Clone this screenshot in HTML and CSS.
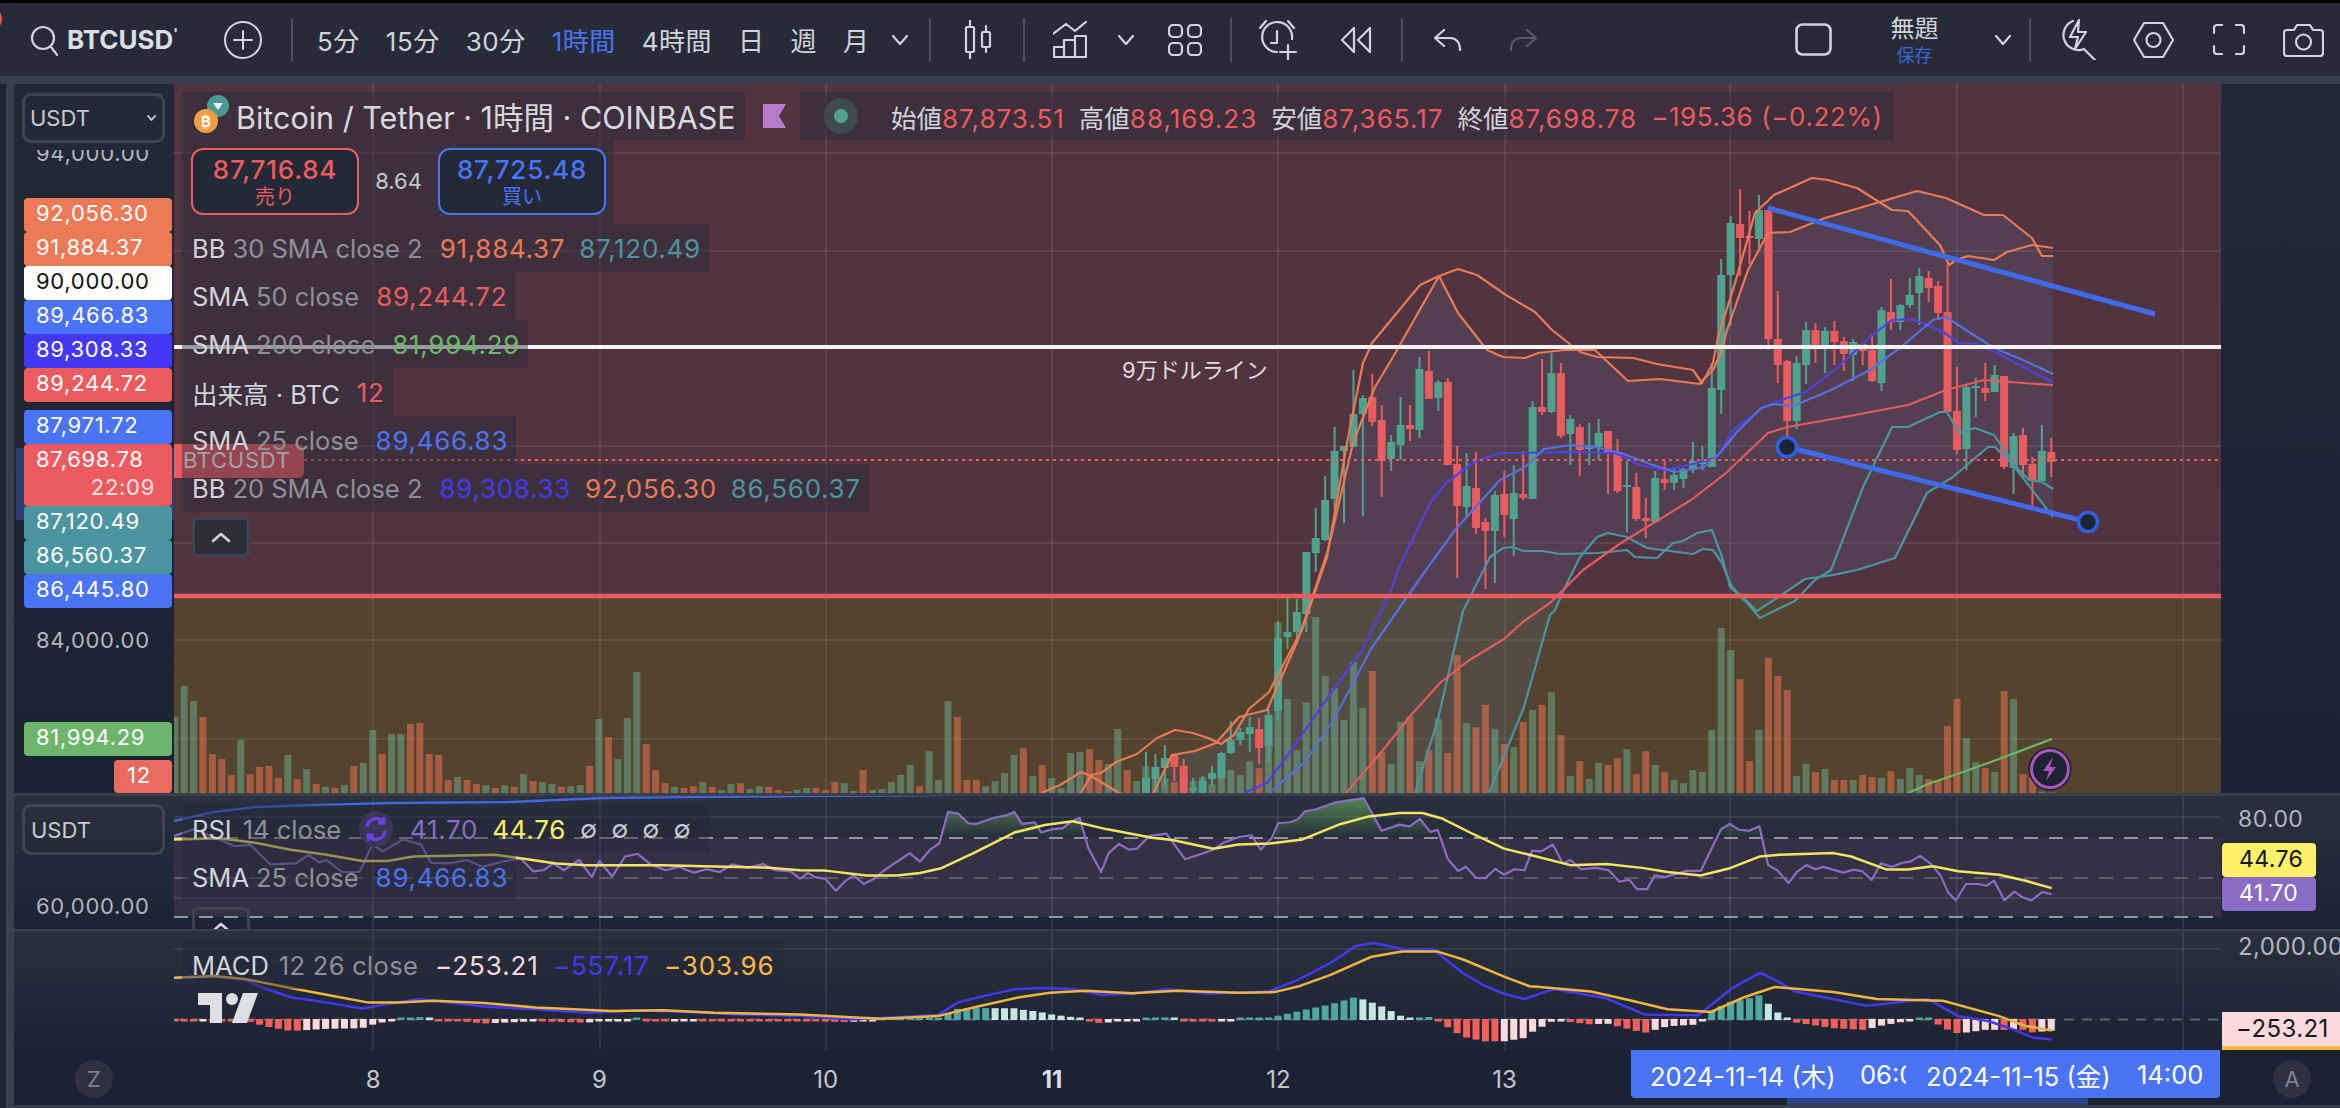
FILE: index.html
```html
<!DOCTYPE html>
<html lang="ja">
<head>
<meta charset="utf-8">
<title>BTCUSD</title>
<link rel="stylesheet" href="styles.css">
</head>
<body>
<div class="app">
  <div class="strip"><span class="avatar-dot"></span></div>
  <header class="toolbar">
    <svg class="ic ic-search" width="28" height="32" viewBox="0 0 28 32"><circle cx="13" cy="14" r="11"/><path d="M21 23l7 9"/></svg>
    <span class="symbol">BTCUSD<sup class="symbol-mark">'</sup></span>
    <svg class="ic ic-plus" width="38" height="38" viewBox="0 0 38 38"><circle cx="19" cy="19" r="18"/><path d="M19 10v18M10 19h18"/></svg>
    <span class="sep sep-a"></span>
    <nav class="intervals">
      <span>5分</span><span>15分</span><span>30分</span><span class="active">1時間</span><span>4時間</span><span>日</span><span>週</span><span>月</span>
    </nav>
    <svg class="ic ic-chev ml-chev1" width="16" height="10" viewBox="0 0 16 10"><path d="M1 1l7 8 7-8"/></svg>
    <span class="sep sep-b"></span>
    <svg class="ic ic-candle" width="29" height="39" viewBox="0 0 29 39"><path d="M6 0v7M6 32v7M22 6v6M22 27v5"/><rect x="2" y="7" width="8" height="25" rx="1"/><rect x="18" y="12" width="8" height="15" rx="1"/></svg>
    <span class="sep sep-c"></span>
    <svg class="ic ic-bars" width="34" height="37" viewBox="0 0 34 37"><path d="M0 13L13 3l9 7L34 0M1 36V26h10v10M11 36V19h11v17M22 36V15h11v21M1 36h32"/></svg>
    <svg class="ic ic-chev ml-chev2" width="16" height="10" viewBox="0 0 16 10"><path d="M1 1l7 8 7-8"/></svg>
    <svg class="ic ic-squares" width="34" height="32" viewBox="0 0 34 32"><rect x="1" y="1" width="13" height="12" rx="4"/><rect x="20" y="1" width="13" height="12" rx="4"/><rect x="1" y="19" width="13" height="12" rx="4"/><rect x="20" y="19" width="13" height="12" rx="4"/></svg>
    <span class="sep sep-d"></span>
    <svg class="ic ic-alarm" width="40" height="41" viewBox="0 0 40 41"><path d="M19 33a15 15 0 1 1 15-13M19 12v12h-6M2 9l6-7M36 9l-6-7M30 26v15M22 33h16"/></svg>
    <svg class="ic ic-rewind" width="32" height="26" viewBox="0 0 32 26"><path d="M14 1L2 13l12 12zM30 1L18 13l12 12z"/></svg>
    <span class="sep sep-e"></span>
    <svg class="ic ic-undo" width="28" height="22" viewBox="0 0 28 22"><path d="M10 1L1 9l9 8M1 9h15c6 0 10 4 10 12"/></svg>
    <svg class="ic ic-redo" width="28" height="22" viewBox="0 0 28 22"><path d="M18 1l9 8-9 8M27 9H12C6 9 2 13 2 21"/></svg>
    <svg class="ic ic-layout" width="37" height="33" viewBox="0 0 37 33"><rect x="1.500" y="1.500" width="34" height="30" rx="6"/></svg>
    <div class="layout-name"><span class="layout-title">無題</span><span class="layout-save">保存</span></div>
    <svg class="ic ic-chev ml-chev3" width="16" height="10" viewBox="0 0 16 10"><path d="M1 1l7 8 7-8"/></svg>
    <span class="sep sep-f"></span>
    <svg class="ic ic-bolt" width="38" height="41" viewBox="0 0 38 41"><path d="M14 2A15 15 0 1 0 25 30M25 30l11 11M20 1L11 18h8l-3 12 11-17h-8z"/></svg>
    <svg class="ic ic-hex" width="41" height="36" viewBox="0 0 41 36"><path d="M1 18L11 1h19l10 17-10 17H11z"/><circle cx="20.500" cy="18" r="7"/></svg>
    <svg class="ic ic-full" width="32" height="31" viewBox="0 0 32 31"><path d="M1 9V4a3 3 0 0 1 3-3h5M23 1h5a3 3 0 0 1 3 3v5M31 22v5a3 3 0 0 1-3 3h-5M9 30H4a3 3 0 0 1-3-3v-5"/></svg>
    <svg class="ic ic-camera" width="41" height="34" viewBox="0 0 41 34"><path d="M4 7h7l3-5h13l3 5h7a3 3 0 0 1 3 3v20a3 3 0 0 1-3 3H4a3 3 0 0 1-3-3V10a3 3 0 0 1 3-3z"/><circle cx="20.500" cy="19" r="7.500"/></svg>
  </header>
  <div class="rule"></div>
  <main class="workspace">
    <div class="rail"></div>
    <div class="stage">

      <section class="pane pane-main">
        <aside class="axis axis-left">
          <div class="range-mark"></div>
          <span class="axis-text text-94">94,000.00</span>
          <div class="currency currency-main"><span>USDT</span><svg class="ic ic-chev-sm" width="9" height="6" viewBox="0 0 9 6"><path d="M1 1l3.500 4L8 1"/></svg></div>
          <div class="tag-stack stack-upper">
            <span class="tag tag-orange">92,056.30</span>
            <span class="tag tag-orange">91,884.37</span>
            <span class="tag tag-white">90,000.00</span>
            <span class="tag tag-blue">89,466.83</span>
            <span class="tag tag-indigo">89,308.33</span>
            <span class="tag tag-red">89,244.72</span>
          </div>
          <div class="tag-stack stack-lower">
            <span class="tag tag-blue">87,971.72</span>
            <span class="tag tag-red tag-last">87,698.78<small>22:09</small></span>
            <span class="tag tag-teal">87,120.49</span>
            <span class="tag tag-teal">86,560.37</span>
            <span class="tag tag-blue">86,445.80</span>
          </div>
          <span class="axis-text text-84">84,000.00</span>
          <span class="tag tag-green tag-sma200">81,994.29</span>
          <span class="tag tag-vol">12</span>
        </aside>
        <div class="plot">
          <svg id="main-chart" class="chart" width="2047" height="709" viewBox="174 84 2047 709"></svg>
          <span class="line-note">9万ドルライン</span>
          <span class="symbol-tag">BTCUSDT</span>
          <svg class="bolt-badge" width="44" height="44" viewBox="0 0 44 44"><circle cx="22" cy="22" r="21.500" class="bolt-ring-outer"/><circle cx="22" cy="22" r="18.500" class="bolt-ring"/><path class="bolt-mark" d="M25 10L15 24h6l-3 10 10-14h-6z"/></svg>
          <div class="legend">
            <div class="legend-head">
              <div class="title-box">
                <svg class="coin" width="44" height="44" viewBox="0 0 44 44"><circle cx="27" cy="12" r="11" fill="#4a9a93"/><path d="M22 9h10l-5 7z" fill="#e8f2f0"/><circle cx="15" cy="27" r="12" fill="#f0a040"/><text x="15" y="33" class="coin-b">₿</text></svg>
                <span class="title-text">Bitcoin / Tether · 1時間 · COINBASE</span>
              </div>
              <svg class="flag" width="23" height="24" viewBox="0 0 23 24"><path d="M0 0h23l-7 12 7 12H0z"/></svg>
              <div class="ohlc-box">
                <span class="status"><i></i></span>
                <span class="ohlc-pair">始値<b>87,873.51</b></span>
                <span class="ohlc-pair">高値<b>88,169.23</b></span>
                <span class="ohlc-pair">安値<b>87,365.17</b></span>
                <span class="ohlc-pair">終値<b>87,698.78</b></span>
                <b class="ohlc-change">−195.36 (−0.22%)</b>
              </div>
            </div>
            <div class="quote-box">
              <div class="quote quote-sell"><b>87,716.84</b><span>売り</span></div>
              <span class="spread">8.64</span>
              <div class="quote quote-buy"><b>87,725.48</b><span>買い</span></div>
            </div>
            <div class="row row-bb30"><em>BB</em> <span>30 SMA close 2</span><b class="c-orange">91,884.37</b><b class="c-teal">87,120.49</b></div>
            <div class="row"><em>SMA</em> <span>50 close</span><b class="c-red">89,244.72</b></div>
            <div class="row"><em>SMA</em> <span>200 close</span><b class="c-green">81,994.29</b></div>
            <div class="row"><em>出来高 · BTC</em><b class="c-red">12</b></div>
            <div class="row"><em>SMA</em> <span>25 close</span><b class="c-blue">89,466.83</b></div>
            <div class="row"><em>BB</em> <span>20 SMA close 2</span><b class="c-indigo">89,308.33</b><b class="c-orange">92,056.30</b><b class="c-teal">86,560.37</b></div>
            <div class="collapse"><svg class="ic ic-up" width="20" height="11" viewBox="0 0 20 11"><path d="M2 9l8-7 8 7"/></svg></div>
          </div>
        </div>
        <aside class="axis axis-right"></aside>
      </section>

      <section class="pane pane-rsi">
        <aside class="axis axis-left">
          <div class="currency currency-rsi"><span>USDT</span></div>
          <span class="axis-text text-60">60,000.00</span>
        </aside>
        <div class="plot">
          <svg id="rsi-chart" class="chart" width="2047" height="133" viewBox="174 796 2047 133"></svg>
          <div class="legend legend-rsi">
            <div class="row row-rsi">
              <em>RSI</em> <span>14 close</span>
              <svg class="sync" width="34" height="36" viewBox="0 0 34 36"><ellipse cx="17" cy="18" rx="17" ry="18" class="sync-bg"/><path class="sync-arrow" d="M8 16a9 9 0 0 1 16-5M26 20a9 9 0 0 1-16 5M25 6v6h-6M9 30v-6h6"/></svg>
              <b class="c-purple">41.70</b><b class="c-yellow">44.76</b>
              <i class="nil">∅</i><i class="nil">∅</i><i class="nil">∅</i><i class="nil">∅</i>
            </div>
            <div class="row"><em>SMA</em> <span>25 close</span><b class="c-blue">89,466.83</b></div>
            <div class="collapse collapse-rsi"><svg class="ic ic-up" width="20" height="11" viewBox="0 0 20 11"><path d="M2 9l8-7 8 7"/></svg></div>
          </div>
        </div>
        <aside class="axis axis-right">
          <span class="axis-text text-80">80.00</span>
          <div class="tag-stack stack-rsi">
            <span class="tag tag-yellow">44.76</span>
            <span class="tag tag-purple">41.70</span>
          </div>
        </aside>
      </section>

      <section class="pane pane-macd">
        <aside class="axis axis-left"></aside>
        <div class="plot">
          <svg id="macd-chart" class="chart" width="2047" height="119" viewBox="174 931 2047 119"></svg>
          <div class="legend legend-macd">
            <div class="row"><em>MACD</em> <span>12 26 close</span><b class="c-pink">−253.21</b><b class="c-indigo">−557.17</b><b class="c-amber">−303.96</b></div>
          </div>
        </div>
        <aside class="axis axis-right">
          <span class="axis-text text-2000">2,000.00</span>
          <span class="tag tag-macd">−253.21</span>
        </aside>
      </section>

      <section class="pane pane-time">
        <aside class="axis axis-left axis-round"><span class="round-btn">Z</span></aside>
        <div class="plot time-plot">
          <div class="ticks">
            <span>8</span><span>9</span><span>10</span><b>11</b><span>12</span><span>13</span>
          </div>
          <div class="pill">
            <span class="pill-date">2024-11-14 (木)</span>
            <span class="pill-clip">06:00</span>
            <span class="pill-date pill-date-end">2024-11-15 (金)</span>
            <span class="pill-time">14:00</span>
          </div>
          <div class="pill-range"></div>
        </div>
        <aside class="axis axis-right axis-round"><span class="round-btn">A</span></aside>
      </section>

    </div>
  </main>
</div>
<script src="chart.js"></script>
</body>
</html>
```

FILE: styles.css
```css
* { box-sizing: border-box; }
html, body { margin: 0; padding: 0; }
body {
  width: 2340px;
  height: 1108px;
  overflow: hidden;
  background: #1b2232;
  color: #d1d4dc;
  font-family: Inter, "Noto Sans CJK JP", "Liberation Sans", sans-serif;
  font-size: 22px;
}
.app { display: flex; flex-direction: column; height: 1108px; }
.strip { height: 3px; background: #000; position: relative; flex: none; }
.avatar-dot { position: absolute; left: -14px; top: 9px; width: 16px; height: 20px; border-radius: 50%; background: #e8503f; z-index: 3; }

/* toolbar */
.toolbar { flex: none; height: 73px; display: flex; align-items: center; padding-left: 30px; background: #262b37; }
.ic { flex: none; fill: none; stroke: #d1d4dc; stroke-width: 2.2; stroke-linecap: round; stroke-linejoin: round; }
.symbol { margin-left: 9px; width: 116px; font-size: 26px; font-weight: 700; color: #dcdee3; white-space: nowrap; }
.symbol-mark { font-size: 14px; line-height: 0; }
.ic-plus { margin-left: 41px; stroke-width: 2; }
.sep { flex: none; width: 2px; height: 44px; background: #4a4f5c; }
.sep-a { margin-left: 29px; }
.intervals { display: flex; gap: 26px; margin-left: 24px; font-size: 26px; letter-spacing: .5px; color: #d1d4dc; white-space: nowrap; }
.intervals .active { color: #4a73f6; }
.ml-chev1 { margin-left: 22px; }
.sep-b { margin-left: 21px; }
.ic-candle { margin-left: 33px; }
.sep-c { margin-left: 30px; }
.ic-bars { margin-left: 28px; }
.ml-chev2 { margin-left: 31px; }
.ic-squares { margin-left: 34px; }
.sep-d { margin-left: 28px; }
.ic-alarm { margin-left: 26px; }
.ic-rewind { margin-left: 42px; }
.sep-e { margin-left: 29px; }
.ic-undo { margin-left: 31px; }
.ic-redo { margin-left: 47px; stroke: #555a66; }
.ic-layout { margin-left: 258px; stroke-width: 2.6; }
.layout-name { margin-left: 50px; width: 66px; display: flex; flex-direction: column; align-items: center; line-height: 26px; margin-top: 2px; }
.layout-title { font-size: 24px; color: #d1d4dc; line-height: 30px; }
.layout-save { font-size: 18px; color: #3b66d8; line-height: 24px; }
.ml-chev3 { margin-left: 47px; }
.sep-f { margin-left: 18px; }
.ic-bolt { margin-left: 28px; }
.ic-hex { margin-left: 36px; }
.ic-full { margin-left: 39px; }
.ic-camera { margin-left: 38px; }

.rule { flex: none; height: 8px; background: #3a404b; }
.workspace { flex: 1; display: flex; min-height: 0; }
.rail { flex: none; width: 6px; background: #1f2431; }
.stage { flex: 1; border-left: 8px solid #3a404b; display: flex; flex-direction: column; min-width: 0; }

/* panes */
.pane { display: grid; grid-template-columns: 160px 2047px 119px; flex: none; }
.pane-main { height: 712px; border-bottom: 3px solid #3a404b; }
.pane-rsi { height: 135px; border-bottom: 2px solid #3a404b; }
.pane-macd { height: 119px; }
.pane-time { height: 58px; border-bottom: 3px solid #3a404b; background: #1b2232; }
.axis { position: relative; overflow: hidden; }
.pane-main .axis { background: linear-gradient(#232936, #1b2232); }
.pane-rsi .axis, .pane-macd .axis { background: linear-gradient(#2a303d, #1c2333); }
.plot { position: relative; overflow: hidden; }
.pane-rsi .plot, .pane-macd .plot { background: linear-gradient(#2a303d, #1c2333); }
.chart { display: block; }

/* axis content */
.axis-text { position: absolute; left: 22px; font-size: 22px; letter-spacing: .7px; line-height: 28px; color: #b4b6bd; white-space: nowrap; }
.text-94 { top: 55px; }
.text-84 { top: 542px; }
.text-60 { top: 96px; }
.axis-right .text-80 { left: 17px; top: 9px; font-size: 23px; letter-spacing: .4px; }
.axis-right .text-2000 { left: 17px; top: 2px; font-size: 24px; letter-spacing: .4px; }
.currency { position: absolute; left: 8px; width: 143px; border: 3px solid #3f4450; border-radius: 9px; background: #232936; display: flex; align-items: center; justify-content: space-between; padding: 0 6px 0 5px; font-size: 22px; color: #c7c9cf; }
.currency-main { top: 9px; height: 50px; box-shadow: 0 7px 0 #232936; }
.currency-rsi { top: 8px; height: 51px; background: transparent; padding-left: 6px; }
.ic-chev-sm { stroke-width: 1.8; }
.range-mark { position: absolute; left: 2px; top: 364px; width: 158px; height: 72px; background: #2e3f6e; }
.tag-stack { position: absolute; left: 10px; width: 148px; display: flex; flex-direction: column; }
.stack-upper { top: 114px; }
.stack-lower { top: 326px; }
.tag { display: block; height: 34px; line-height: 30px; border-radius: 4px; padding-left: 12px; font-size: 22px; letter-spacing: .7px; color: #fff; white-space: nowrap; }
.tag-orange { background: #ec7a57; }
.tag-white { background: #fff; color: #111; }
.tag-blue { background: #4a73f6; }
.tag-indigo { background: #4339f5; }
.tag-red { background: #ec5b60; }
.tag-teal { background: #4a95a0; }
.tag-last { height: 62px; }
.tag-last small { display: block; text-align: right; padding-right: 17px; margin-top: -2px; font-size: 22px; color: #fff; opacity: .82; }
.tag-green { background: #6db56c; }
.tag-sma200 { position: absolute; left: 10px; top: 638px; width: 148px; }
.tag-vol { position: absolute; left: 100px; top: 676px; width: 58px; height: 33px; padding-left: 13px; background: #e96b60; }
.stack-rsi { left: 1px; top: 47px; width: 94px; }
.tag-yellow { background: #fff06a; color: #111; padding-left: 17px; font-size: 23px; letter-spacing: .4px; line-height: 33px; }
.tag-purple { background: #8a6cc4; padding-left: 17px; font-size: 23px; letter-spacing: .4px; line-height: 33px; }
.tag-macd { position: absolute; left: 1px; top: 81px; width: 118px; height: 38px; background: #fbd9dc; color: #131722; padding-left: 14px; border-bottom: 4px solid #f9b942; border-radius: 0; font-size: 24px; letter-spacing: .4px; line-height: 33px; }

/* legend */
.legend { position: absolute; left: 8px; top: 8px; display: flex; flex-direction: column; align-items: flex-start; }
.legend-head { display: flex; align-items: center; height: 48px; }
.title-box { width: 563px; height: 48px; display: flex; align-items: center; padding-left: 9px; background: rgba(37,42,56,.44); white-space: nowrap; }
.coin { flex: none; margin-right: 1px; }
.coin-b { font-size: 15px; font-weight: 700; fill: #fff; text-anchor: middle; }
.title-text { font-size: 30.500px; color: #d8d9de; margin-left: 0; }
.flag { flex: none; margin-left: 18px; fill: #b67bc9; }
.ohlc-box { margin-left: 14px; width: 1094px; height: 48px; display: flex; align-items: center; padding-left: 24px; background: rgba(37,42,56,.44); font-size: 25.500px; white-space: nowrap; }
.status { flex: none; width: 34px; height: 36px; border-radius: 50%; background: #3f4a50; display: flex; align-items: center; justify-content: center; margin-right: 33px; }
.status i { width: 14px; height: 14px; border-radius: 50%; background: #4fa28e; }
.ohlc-pair { color: #d1d4dc; margin-right: 14px; }
.ohlc-pair b { font-weight: 400; font-size: 26px; color: #ec5b60; letter-spacing: 1px; }
.ohlc-change { font-weight: 400; font-size: 26px; color: #ec5b60; letter-spacing: .6px; }
.quote-box { width: 432px; height: 84px; display: flex; align-items: flex-start; padding: 8px 0 0 9px; background: rgba(37,42,56,.44); }
.quote { width: 168px; height: 67px; border: 2.500px solid; border-radius: 12px; background: #232936; display: flex; flex-direction: column; align-items: center; line-height: 1; }
.quote b { font-size: 26px; font-weight: 500; margin-top: 7px; letter-spacing: .8px; }
.quote span { font-size: 20px; margin-top: 4px; }
.quote-sell { border-color: #ec5b60; color: #ec5b60; }
.quote-buy { border-color: #4a73f6; color: #4a73f6; }
.spread { width: 79px; text-align: center; font-size: 22px; line-height: 67px; color: #c7c9cf; }
.row { height: 48px; display: flex; align-items: center; padding: 0 8px 0 10px; background: rgba(37,42,56,.44); font-size: 25.500px; white-space: nowrap; }
.row em { font-style: normal; color: #d1d4dc; }
.row > span { color: #8f9096; margin-left: 7px; }
.row b { font-weight: 400; font-size: 26px; margin-left: 14px; letter-spacing: .7px; }
.row > span + b, .row > em + b { margin-left: 17px; }
.c-orange { color: #ea7a55; }
.c-teal { color: #4a95a0; }
.c-red { color: #ec5b60; }
.c-green { color: #6ab765; }
.c-blue { color: #4a73f6; }
.c-indigo { color: #4339f5; }
.c-purple { color: #8a6cc4; }
.c-yellow { color: #fff06a; }
.c-pink { color: #fbd9dc; }
.c-amber { color: #f9b942; }
.collapse { width: 58px; height: 40px; margin: 5px 0 0 10px; border: 3px solid #3e4450; border-radius: 6px; background: #2e2e39; display: flex; align-items: center; justify-content: center; }
.ic-up { stroke-width: 2.6; }
.legend-rsi { top: 9px; }
.row-rsi { padding-right: 18px; }
.row-rsi > span { margin-left: 11px; }
.sync { flex: none; margin-left: 18px; }
.sync-bg { fill: #3a3658; }
.sync-arrow { fill: none; stroke: #6a40ea; stroke-width: 3; }
.row-rsi .c-purple { margin-left: 17px; }
.nil { font-style: normal; font-size: 25px; color: #c7c9cf; margin-left: 14px; }
.collapse-rsi { margin-top: 6px; background: transparent; }
.legend-macd { top: 10px; }
.legend-macd .row > span { margin-left: 10px; letter-spacing: .3px; }
.legend-macd .row b { letter-spacing: .9px; }
.line-note { position: absolute; left: 948px; top: 268px; font-size: 22px; color: #e2dcdc; white-space: nowrap; }
.symbol-tag { position: absolute; left: 0; top: 360px; width: 130px; height: 34px; padding-left: 9px; line-height: 32px; border-radius: 0 6px 6px 0; background: #ec5b60; color: #fff; font-size: 22px; letter-spacing: .7px; }
.bolt-badge { position: absolute; left: 1854px; top: 663px; }
.bolt-ring-outer { fill: #1a1d2c; }
.bolt-ring { fill: #1f2233; stroke: #a855b8; stroke-width: 3; }
.bolt-mark { fill: #a855b8; }

/* time axis */
.ticks { display: flex; padding-left: 86px; }
.ticks > * { flex: none; width: 226.300px; text-align: center; font-size: 24px; line-height: 60px; font-weight: 400; color: #c4c6cc; }
.ticks b { font-weight: 700; color: #dcdee3; }
.pill { position: absolute; left: 1457px; top: 0; width: 589px; height: 48px; display: flex; align-items: center; padding-left: 19px; background: #4a73f6; border-radius: 0 0 4px 4px; color: #fff; font-size: 25.500px; white-space: nowrap; }
.pill-date { flex: none; width: 210px; }
.pill-clip { flex: none; width: 46px; overflow: hidden; }
.pill-date-end { margin-left: 20px; width: 211px; }
.pill-range { position: absolute; left: 1613px; top: 48px; width: 301px; height: 7px; background: #2e4480; }
.axis-round { background: #1b2232; }
.round-btn { position: absolute; top: 10px; width: 38px; height: 38px; border-radius: 50%; background: #2e3240; color: #7f838e; font-size: 22px; line-height: 38px; text-align: center; }
.axis-left .round-btn { left: 61px; }
.axis-right .round-btn { left: 52px; }

/* chart marks */
.bg-upper { fill: #523440; }
.bg-lower { fill: #53432f; }
.grid { stroke: rgba(255,255,255,.08); stroke-width: 2; fill: none; }
.band { fill: rgba(90,110,150,.2); }
.vol-g { fill: #6bb18d; fill-opacity: .5; }
.vol-r { fill: #f97755; fill-opacity: .5; }
.body-g { fill: #4fa28e; }
.body-r { fill: #e85c60; }
.wick-g { stroke: #4fa28e; stroke-width: 2; }
.wick-r { stroke: #e85c60; stroke-width: 2; }
.ln { fill: none; stroke-width: 2.200; stroke-linejoin: round; }
.ln-orange { stroke: #ea7a55; }
.ln-teal { stroke: #4a95a0; }
.ln-indigo { stroke: #5040e0; }
.ln-blue { stroke: #5570e0; }
.ln-red { stroke: #e35b5e; }
.ln-green { stroke: #6ab765; }
.price-white { stroke: #f5f5f7; stroke-width: 4; }
.price-red { stroke: #ec5b60; stroke-width: 4.500; }
.price-now { stroke: #ec5b60; stroke-width: 2; stroke-dasharray: 3 4; }
.draw { stroke: #3f6be8; stroke-width: 5; }
.draw-end { fill: #1c2433; stroke: #2f60e0; stroke-width: 3.500; }
.rsi-band { fill: #353145; }
.dash { stroke: #94949c; stroke-width: 2; stroke-dasharray: 14 11; }
.dash-mid { stroke: #5d5c68; }
.ln-rsi { stroke: #8a6cc4; }
.ln-rsima { stroke: #f2e464; stroke-width: 2.500; }
.ln-long { stroke: #3f68e0; stroke-width: 2.500; }
.ln-macd { stroke: #4339f0; stroke-width: 2.500; }
.ln-signal { stroke: #f0b540; stroke-width: 2.500; }
.zero { stroke: #5d5f68; stroke-width: 2; stroke-dasharray: 10 8; }
.h-up { fill: #4fa79d; }
.h-upl { fill: #c5e6e2; }
.h-dn { fill: #f0605c; }
.h-dnl { fill: #fbd9dc; }
.tv-logo { fill: #dcdfe3; }
```

FILE: chart.js
```js
// Chart marks, drawn in page pixels. Every pane's viewBox uses the same coordinates.
var NS = 'http://www.w3.org/2000/svg';
var BAR = 9.43, X0 = 1278, PLOT_L = 174, PLOT_R = 2221;
function bx(k) { return X0 + k * BAR; }
function el(parent, tag, attrs) {
  var n = document.createElementNS(NS, tag);
  for (var a in attrs) n.setAttribute(a, attrs[a]);
  parent.appendChild(n);
  return n;
}
function line(p, x1, y1, x2, y2, cls) { return el(p, 'line', { x1: x1, y1: y1, x2: x2, y2: y2, 'class': cls }); }
function ptsStr(a) { return a.map(function (q) { return q[0] + ',' + q[1]; }).join(' '); }
function poly(p, a, cls) { return el(p, 'polyline', { points: ptsStr(a), 'class': 'ln ' + cls }); }
function parse(s) { return s.trim().split(/\s+/).map(function (q) { var v = q.split(','); return [+v[0], +v[1]]; }); }
// pane sampling: values were read on a grid of 1.96 x 2.914 units per pixel
function scaled(ox, s) { return parse(s).map(function (q) { return [ox + q[0] / 1.96, 570 + q[1] / 2.914]; }); }
var VGRID = [373, 600, 826, 1052, 1278, 1505, 1730, 1957, 2183];

/* ---------- main pane ---------- */
var U1 = parse('1081,793 1091,775 1101,773 1116,762 1137,754 1157,738 1175,730 1193,733 1208,738 1221,744 1234,735 1249,709 1269,692 1290,652 1302,630 1327,557 1347,443 1363,363 1372,343 1420,285 1439,276 1458,269 1477,275 1506,295 1535,312 1552,330 1580,352 1597,357 1633,358 1657,364 1693,370 1702,383 1713,363 1718,337 1736,280 1755,213 1774,195 1812,178 1828,180 1857,188 1892,210 1908,211 1940,245 1949,265 1956,260 1968,256 1994,260 2007,252 2032,245 2053,248');
var U2 = parse('1041,793 1060,785 1081,772 1091,776 1119,793 1150,800 1172,755 1195,751 1216,743 1239,717 1267,710 1297,642 1307,613 1328,550 1353,443 1375,387 1393,357 1439,276 1458,313 1487,350 1503,357 1525,358 1538,353 1564,350 1595,350 1628,381 1660,379 1700,384 1703,380 1713,370 1722,350 1727,330 1748,270 1768,233 1790,232 1825,218 1863,207 1917,191 1946,198 1984,215 2003,215 2032,238 2042,256 2053,256');
var L1 = parse('1415,793 1438,719 1463,611 1470,597 1490,557 1503,548 1513,547 1523,551 1543,551 1560,554 1597,553 1627,550 1635,557 1657,558 1673,543 1683,541 1697,533 1712,530 1722,557 1730,587 1747,603 1760,618 1780,608 1795,601 1815,580 1831,570 1863,487 1892,427 1908,427 1940,412 1947,412 1959,433 1975,428 1994,435 2016,467 2029,480 2042,482 2053,489');
var L2 = parse('1489,793 1524,707 1550,615 1555,610 1567,583 1580,557 1597,537 1608,533 1627,537 1647,548 1693,554 1703,549 1713,550 1722,563 1732,587 1757,611 1780,596 1805,579 1833,575 1857,570 1895,558 1927,493 1953,477 1988,447 1995,447 2013,465 2053,517');
var BASIS = parse('1244,793 1267,783 1290,752 1333,690 1361,652 1389,596 1398,570 1430,503 1446,483 1474,462 1500,453 1525,453 1570,452 1615,453 1640,465 1666,470 1697,463 1717,457 1733,430 1764,407 1787,398 1806,392 1838,367 1870,337 1892,320 1911,319 1940,330 1959,343 1978,344 1997,353 2029,370 2053,382');
var SMA25 = parse('1269,793 1305,762 1333,721 1371,649 1407,597 1426,570 1455,530 1500,480 1525,467 1544,449 1570,445 1595,447 1621,453 1653,465 1675,472 1704,467 1720,453 1736,433 1761,408 1774,404 1793,406 1831,390 1870,370 1901,347 1933,320 1946,317 1994,348 2023,360 2053,374');
var SMA50 = parse('1346,793 1379,755 1412,714 1440,683 1468,661 1504,639 1524,621 1550,603 1583,570 1621,543 1691,500 1726,473 1768,433 1787,427 1844,417 1908,405 1946,390 1984,380 2023,383 2053,385');
var SMA200 = parse('1908,793 1928,784 1963,772 1999,759 2052,739');

// volume: colour letter, sampled x, sampled bar top
var VOL = [
 [0, 'g347,427 g363,338 g382,382 r400,428 r419,536 r437,551 r455,597 g474,495 r492,595 r511,574 r529,571 r548,606 g567,539 r585,610 g604,580 r622,624 g640,632 r658,635 g677,627 r696,571 g714,562 g733,466 r751,536 g770,478 g788,478 r806,449 r825,446 r843,536 r862,539 r880,612 g899,603 r917,612 r936,624 g954,627 r972,635 g991,627 r1010,632 g1028,595 r1047,615 g1065,618 g1083,624 r1102,632 g1120,630 g1139,627 r1158,571 g1176,434 r1195,487 g1213,551 g1232,431 g1250,297 r1269,507 r1287,583 r1305,621 g1324,632 r1342,635 r1361,630 g1380,618 r1398,632 g1416,641 g1435,624 r1453,621 g1472,638 g1490,630 r1509,632 r1527,641 r1545,645 g1564,640'],
 [800, 'g14,635 r32,635 r50,641 r69,618 g88,621 g106,644 r125,583 g143,641 g162,638 g180,618 g199,597 g217,568 r236,630 g254,528 g273,612 g292,382 r310,428 r328,612 r347,612 g365,630 g384,615 g403,592 g421,539 r440,519 g458,600 r476,568 g495,606 g513,636 g532,533 g551,530 r569,522 r587,554 g606,565 g624,463 r643,583 g661,615 g680,572 g698,580 g716,607 r735,618 r752,600 g772,615 g790,605 g809,625 g827,570 g845,583 g864,597 g883,557 r901,577 g920,433 g938,154 g957,376 g975,525 g994,386 g1012,137 g1031,309 g1049,344 g1067,437 g1086,268 g1104,402 r1123,294 r1141,530 g1160,565 g1179,443 r1197,427 g1216,557 r1234,525 g1253,433 r1271,533 r1290,248 g1308,446 r1327,458 r1345,393 g1363,463 r1382,507 g1400,516 r1418,443 g1437,408 r1455,393 g1474,356 r1492,481 g1511,600 r1530,557 g1548,609'],
 [1540, 'g115,562 r133,568 r152,548 g171,522 r189,595 r208,528 g226,568 r245,589 g263,612 g281,621 g300,583 g318,589 g337,466 g355,169 g374,233 r392,318 r411,557 g430,466 r448,256 r467,309 r485,350 g503,600 g521,565 r540,589 g559,580 r577,612 r595,612 g614,612 r632,597 r651,603 g669,606 r688,586 g707,609 g724,577 g743,597 r762,609 r780,612 r799,455 r818,376 g836,490 g854,560 r873,577 g891,589 r910,353 g929,376 r947,595 r965,603 g984,645 r1002,648']
];

// candles: k, colour, wick top, body top, body bottom, wick bottom
var CANDLES = [
 [-14,'g',752,778,793,800],[-13,'g',754,767,779,786],[-12,'g',745,758,768,786],[-11,'r',754,755,767,781],[-10,'r',759,766,793,800],[-9,'g',778,788,790,793],[-8,'g',776,781,793,800],[-7,'g',766,773,779,786],[-6,'g',752,753,778,779],[-5,'g',721,740,753,754],[-4,'g',728,732,740,745],[-3,'g',717,727,734,752],[-2,'r',718,729,748,764],[-1,'g',709,715,746,762],
 [0,'g',621,638,711,721],[1,'g',596,632,637,649],[2,'g',599,612,632,640],[3,'g',552,552,614,632],[4,'g',508,538,553,572],[5,'g',476,500,540,541],[6,'g',427,451,499,509],[7,'g',446,446,451,523],[8,'g',370,414,447,447],[9,'g',395,398,414,516],
 [10,'r',374,397,422,426],[11,'r',405,420,461,497],[12,'g',435,442,459,471],[13,'g',397,425,445,460],[14,'r',405,425,429,441],[15,'g',357,369,430,438],[16,'r',351,371,399,399],[17,'g',380,382,398,411],[18,'r',378,382,465,465],[19,'r',446,464,506,578],
 [20,'g',453,486,507,517],[21,'r',452,488,528,534],[22,'r',518,522,531,589],[23,'g',491,495,531,583],[24,'r',471,494,515,537],[25,'g',465,493,519,556],[26,'r',451,494,498,500],[27,'g',401,407,499,499],[28,'r',359,407,412,415],[29,'g',353,373,412,413],
 [30,'r',363,373,436,438],[31,'g',415,419,434,465],[32,'r',424,427,450,476],[33,'g',423,445,449,465],[34,'g',419,433,447,460],[35,'r',431,431,454,494],[36,'r',439,452,491,493],[37,'g',461,485,487,532],[38,'r',473,487,519,521],[39,'r',498,518,521,538],
 [40,'g',471,478,522,522],[41,'r',461,479,483,490],[42,'g',468,475,483,490],[43,'g',468,469,479,488],[44,'g',442,461,470,473],[45,'g',446,462,464,470],[46,'g',363,388,467,467],[47,'g',259,275,390,414],[48,'g',216,223,275,326],[49,'r',189,224,238,276],
 [50,'r',211,236,238,264],[51,'g',195,210,239,248],[52,'r',210,210,339,350],[53,'r',291,339,365,383],[54,'r',360,361,421,437],[55,'g',356,363,421,429],[56,'g',322,330,365,384],[57,'r',323,330,345,363],[58,'g',327,331,345,373],[59,'r',321,331,342,365],
 [60,'r',337,341,354,371],[61,'g',339,342,355,381],[62,'r',343,344,351,365],[63,'r',334,350,381,382],[64,'g',307,310,383,391],[65,'r',279,312,322,330],[66,'g',304,305,322,330],[67,'g',278,295,305,308],[68,'g',268,276,293,325],[69,'r',271,278,288,302],
 [70,'r',281,286,313,320],[71,'r',265,312,412,412],[72,'r',367,411,450,454],[73,'g',385,387,449,470],[74,'g',378,386,387,417],[75,'r',363,388,393,401],[76,'g',365,375,392,392],[77,'r',376,376,467,469],[78,'g',433,436,468,494],[79,'r',428,435,465,479],
 [80,'r',457,464,480,506],[81,'g',425,451,481,482],[82,'r',438,452,462,477]
];

function drawMain(svg) {
  el(svg, 'rect', { x: PLOT_L, y: 84, width: 2047, height: 512, 'class': 'bg-upper' });
  el(svg, 'rect', { x: PLOT_L, y: 596, width: 2047, height: 197, 'class': 'bg-lower' });
  VGRID.forEach(function (x) { line(svg, x, 84, x, 793, 'grid'); });
  [153, 251, 446, 543, 640, 739].forEach(function (y) { line(svg, PLOT_L, y, PLOT_R, y, 'grid'); });

  var band = U2.concat(L2.slice().reverse(), [[1041, 800]]);
  el(svg, 'polygon', { points: ptsStr(band), 'class': 'band' });

  VOL.forEach(function (part) {
    part[1].split(' ').forEach(function (tok) {
      var v = tok.slice(1).split(',');
      var k = Math.round((part[0] + v[0] / 1.96 - X0) / BAR);
      var y = 570 + v[1] / 2.914;
      el(svg, 'rect', { x: bx(k) - 3.5, y: y, width: 7, height: Math.max(793 - y, 1), 'class': tok[0] === 'g' ? 'vol-g' : 'vol-r' });
    });
  });

  CANDLES.forEach(function (c) {
    var x = bx(c[0]);
    line(svg, x, c[2], x, c[5], 'wick-' + c[1]);
    el(svg, 'rect', { x: x - 4, y: c[3], width: 8, height: Math.max(c[4] - c[3], 2), 'class': 'body-' + c[1] });
  });

  poly(svg, U1, 'ln-orange'); poly(svg, U2, 'ln-orange');
  poly(svg, L1, 'ln-teal'); poly(svg, L2, 'ln-teal');
  poly(svg, BASIS, 'ln-indigo'); poly(svg, SMA25, 'ln-blue');
  poly(svg, SMA50, 'ln-red'); poly(svg, SMA200, 'ln-green');

  line(svg, PLOT_L, 347, PLOT_R, 347, 'price-white');
  line(svg, PLOT_L, 596, PLOT_R, 596, 'price-red');
  line(svg, 304, 460, PLOT_R, 460, 'price-now');

  line(svg, 1768, 208, 2155, 314, 'draw');
  line(svg, 1787, 447, 2088, 522, 'draw');
  el(svg, 'circle', { cx: 1787, cy: 447, r: 9.5, 'class': 'draw-end' });
  el(svg, 'circle', { cx: 2088, cy: 522, r: 9.5, 'class': 'draw-end' });
}

/* ---------- RSI pane ---------- */
var RSI = scaled(0, '341,775 380,755 430,785 460,805 490,800 530,858 580,855 605,830 625,852 640,845 670,880 705,880 730,800 750,820 790,785 825,800 845,853 880,855 915,845 945,865 985,850 1020,840 1045,878 1065,875 1085,855 1105,875 1135,845 1160,895 1175,848 1200,893 1225,835 1250,827 1275,858 1305,875 1330,865 1360,882 1385,872 1410,880 1435,858 1465,868 1495,857 1520,875 1550,878 1568,900')
 .concat(scaled(800, '15,883 30,895 50,900 70,935 90,905 105,890 125,915 145,900 165,875 195,845 215,825 235,850 255,815 273,797 290,705 310,710 330,738 345,740 380,722 405,715 420,705 435,740 460,735 473,765 495,755 515,752 530,735 548,722 565,810 590,880 605,825 625,798 645,815 660,812 685,775 718,768 755,843 810,815 830,795 860,778 885,773 903,815 925,780 937,738 960,735 975,727 990,703 1010,698 1050,677 1105,665 1140,760 1175,742 1195,747 1215,725 1235,763 1250,757 1270,843 1290,877 1305,865 1325,897 1343,898 1363,871 1380,888 1400,872 1420,875 1435,818 1453,820'))
 .concat(scaled(1540, '25,800 45,855 60,845 80,872 110,868 135,875 155,908 175,903 190,930 210,930 225,890 245,895 285,877 315,877 355,755 372,740 390,757 410,760 430,747 447,860 465,875 487,912 505,878 522,860 540,872 555,865 595,882 615,873 632,878 650,903 668,855 690,865 710,853 725,850 745,833 765,855 785,890 800,940 815,963 835,915 860,915 875,920 890,905 910,962 930,937 945,953 963,963 985,938 1003,945'));
var RSIMA = scaled(0, '341,785 430,782 500,795 570,815 640,830 710,848 760,848 810,835 880,833 970,830 1020,840 1090,855 1150,860 1300,860 1420,865 1500,867 1568,875')
 .concat(scaled(800, '50,876 130,890 190,890 235,883 275,870 340,825 420,765 480,743 535,732 600,755 690,780 730,787 810,812 860,800 920,797 985,785 1060,740 1115,718 1175,708 1220,708 1260,725 1320,770 1380,812 1430,830 1510,860'))
 .concat(scaled(1540, '130,857 200,868 250,880 315,890 370,870 430,835 470,830 575,825 610,835 680,873 720,873 770,863 820,878 900,888 950,905 1003,927'));

function drawRsi(svg) {
  var defs = el(svg, 'defs', {});
  var grad = el(defs, 'linearGradient', { id: 'ob-fill', gradientUnits: 'userSpaceOnUse', x1: 0, y1: 800, x2: 0, y2: 838 });
  el(grad, 'stop', { offset: 0, 'stop-color': '#5f9a58', 'stop-opacity': .75 });
  el(grad, 'stop', { offset: 1, 'stop-color': '#5f9a58', 'stop-opacity': 0 });
  var clip = el(defs, 'clipPath', { id: 'ob-clip' });
  el(clip, 'rect', { x: PLOT_L, y: 796, width: 2047, height: 42 });

  el(svg, 'rect', { x: PLOT_L, y: 838, width: 2047, height: 79, 'class': 'rsi-band' });
  VGRID.forEach(function (x) { line(svg, x, 796, x, 929, 'grid'); });
  [817, 898].forEach(function (y) { line(svg, PLOT_L, y, PLOT_R, y, 'grid'); });
  [838, 917].forEach(function (y) { line(svg, PLOT_L, y, PLOT_R, y, 'dash'); });
  line(svg, PLOT_L, 878, PLOT_R, 878, 'dash dash-mid');

  var area = RSI.concat([[RSI[RSI.length - 1][0], 900], [RSI[0][0], 900]]);
  el(svg, 'polygon', { points: ptsStr(area), fill: 'url(#ob-fill)', 'clip-path': 'url(#ob-clip)' });

  poly(svg, parse('174,821 214,812 255,807 388,803 510,802 602,798 800,796 943,795'), 'ln-long');
  poly(svg, RSI, 'ln-rsi');
  poly(svg, RSIMA, 'ln-rsima');
}

/* ---------- MACD pane ---------- */
var MACD = scaled(0, '341,1190 420,1185 480,1195 520,1220 570,1245 640,1260 710,1278 760,1265 820,1250 880,1260 950,1272 1050,1280 1150,1290 1250,1283 1350,1288 1450,1295 1568,1300')
 .concat(scaled(800, '100,1310 270,1297 310,1260 350,1245 420,1222 470,1218 540,1222 590,1238 650,1235 720,1222 800,1235 920,1228 975,1195 1040,1145 1090,1095 1125,1087 1190,1107 1240,1105 1300,1175 1340,1210 1380,1235 1420,1250 1470,1225'))
 .concat(scaled(1540, '30,1222 130,1248 205,1295 310,1298 375,1220 432,1173 465,1198 500,1228 640,1270 760,1250 820,1300 880,1315 930,1340 965,1362 1003,1368'));
var SIGNAL = scaled(0, '341,1188 420,1183 480,1192 570,1218 640,1238 720,1260 780,1260 850,1255 950,1262 1050,1275 1200,1285 1300,1283 1400,1290 1568,1295')
 .concat(scaled(800, '100,1303 160,1308 270,1300 340,1275 430,1245 490,1232 560,1226 650,1233 740,1226 860,1232 930,1230 980,1212 1040,1180 1120,1127 1180,1112 1250,1112 1300,1135 1380,1185 1430,1213'))
 .concat(scaled(1540, '0,1215 100,1228 180,1255 250,1280 335,1288 400,1245 460,1215 575,1230 660,1250 790,1255 900,1300 950,1328 1003,1342'));
function at(series, x) {
  for (var i = 1; i < series.length; i++) {
    if (x <= series[i][0]) {
      var a = series[i - 1], b = series[i];
      return a[1] + (b[1] - a[1]) * (x - a[0]) / (b[0] - a[0]);
    }
  }
  return series[series.length - 1][1];
}
function drawMacd(svg) {
  VGRID.forEach(function (x) { line(svg, x, 931, x, 1050, 'grid'); });
  line(svg, PLOT_L, 949, PLOT_R, 949, 'grid');
  line(svg, PLOT_L, 1019.5, PLOT_R, 1019.5, 'zero');
  var prev = 0;
  for (var k = -117; k <= 82; k++) {
    var x = bx(k);
    var h = (at(SIGNAL, x) - at(MACD, x)) * 1.3;
    var cls = h >= 0 ? (h >= prev ? 'h-up' : 'h-upl') : (h <= prev ? 'h-dn' : 'h-dnl');
    var size = Math.max(Math.abs(h), 2.5);
    el(svg, 'rect', { x: x - 3.5, y: h >= 0 ? 1020 - size : 1019, width: 7, height: size, 'class': cls });
    prev = h;
  }
  poly(svg, MACD, 'ln-macd');
  poly(svg, SIGNAL, 'ln-signal');
  el(svg, 'path', { d: 'M198 993h24v30h-12v-18h-12zM258 993h-15l-11 30h15z', 'class': 'tv-logo' });
  el(svg, 'circle', { cx: 232, cy: 999, r: 6, 'class': 'tv-logo' });
}

drawMain(document.getElementById('main-chart'));
drawRsi(document.getElementById('rsi-chart'));
drawMacd(document.getElementById('macd-chart'));
```
